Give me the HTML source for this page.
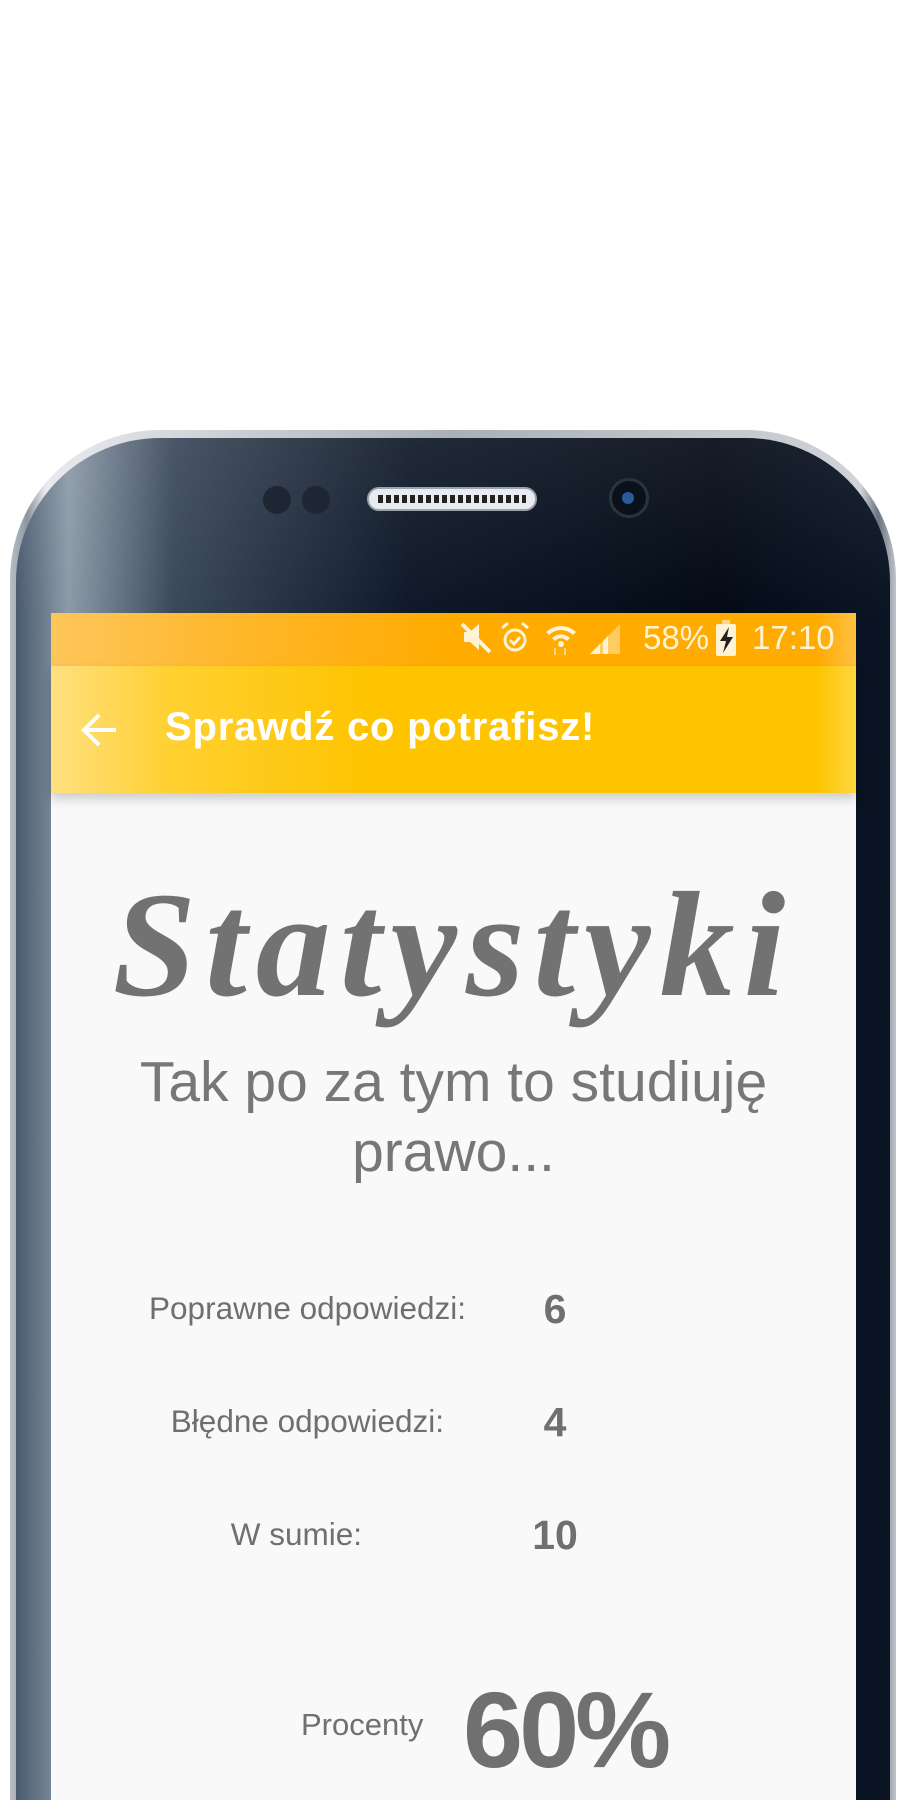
<!DOCTYPE html>
<html style="overflow:hidden;height:1800px"><head><meta charset="utf-8"><style>
*{margin:0;padding:0;box-sizing:border-box}
html,body{width:900px;height:1800px;overflow:hidden}
body{background:#fff;font-family:"Liberation Sans",sans-serif}
#wrap{position:relative;width:900px;height:1800px;overflow:hidden}
.abs{position:absolute}
#rim{left:10px;top:430px;width:886px;height:1370px;border-radius:150px 150px 0 0;background:linear-gradient(90deg,#b8bec6,#8d96a0 2%,#e8eaee 4%,#aab0b8 50%,#d0d4d8 96%,#6c7480 98%,#c0c4ca)}
#body{left:16px;top:438px;width:874px;height:1362px;border-radius:144px 144px 0 0;background:linear-gradient(90deg,#4a5a6e 0%,#8c9aa8 6%,#3a485a 18%,#0e1828 45%,#030a16 80%,#0a1424 100%)}
#topgl{left:16px;top:438px;width:874px;height:180px;border-radius:144px 144px 0 0;background:linear-gradient(180deg,rgba(255,255,255,.08),rgba(0,0,0,0))}
#screen{left:51px;top:613px;width:805px;height:1187px;background:#f9f9f9}
#status{left:51px;top:613px;width:805px;height:53px;background:linear-gradient(90deg,#fdc65a 0%,#ffb627 25%,#ffab00 50%,#ffab00 95%,#ffc040)}
#bar{left:51px;top:666px;width:805px;height:127px;background:linear-gradient(90deg,#ffe080 0%,#ffd030 15%,#fec400 40%,#fec400 95%,#ffd640);box-shadow:0 6px 10px rgba(0,0,0,.18)}
.st{color:#fff3d6;font-size:33px;top:619px;font-weight:300}
.ttl{left:165px;top:705px;color:#fff;font-size:40px;font-weight:bold;letter-spacing:0.8px}
.big{left:51px;width:805px;text-align:center;top:859px;font-family:"Liberation Serif",serif;font-style:italic;font-weight:bold;font-size:150px;color:#727272;letter-spacing:9px}
.sub{left:51px;width:805px;text-align:center;top:1047px;font-size:57px;color:#777;line-height:70px}
.lab{font-size:31.5px;color:#6f6f6f;text-align:right;width:400px;left:66px}
.val{font-size:41px;font-weight:bold;color:#6f6f6f;width:120px;text-align:center;left:495px}
</style></head><body><div id="wrap">
<div id="rim" class="abs"></div>
<div id="body" class="abs"></div>
<div id="topgl" class="abs"></div>
<div class="abs" style="left:263px;top:486px;width:28px;height:28px;border-radius:50%;background:#1e2633"></div>
<div class="abs" style="left:302px;top:486px;width:28px;height:28px;border-radius:50%;background:#1e2633"></div>
<div class="abs" style="left:367px;top:487px;width:170px;height:24px;border-radius:12px;background:#e8ecf0;border:2px solid #9aa4ae"></div>
<div class="abs" style="left:378px;top:495px;width:148px;height:8px;background:repeating-linear-gradient(90deg,#222 0 5px,transparent 5px 8px)"></div>
<div class="abs" style="left:609px;top:478px;width:40px;height:40px;border-radius:50%;background:#0b111a;border:3px solid #2a3340"></div>
<div class="abs" style="left:622px;top:492px;width:12px;height:12px;border-radius:50%;background:#2a5a9a"></div>

<div id="screen" class="abs"></div>
<div id="status" class="abs"></div>
<div id="bar" class="abs"></div>

<svg class="abs" style="left:460px;top:620px" width="180" height="36" viewBox="0 0 180 36">
<g fill="#fff3d6">
<path d="M4 12h6l9-8v26l-9-8H4z"/>
<path d="M2 4l28 28" stroke="#fff3d6" stroke-width="4"/>
<circle cx="55" cy="20" r="10" fill="none" stroke="#fff3d6" stroke-width="3"/>
<path d="M50 20l4 4 6-7" fill="none" stroke="#fff3d6" stroke-width="3"/>
<path d="M42 8l6-5M68 8l-6-5" stroke="#fff3d6" stroke-width="3"/>
<path d="M86 12a22 22 0 0 1 30 0l-3 3a17 17 0 0 0-24 0z"/>
<path d="M92 18a13 13 0 0 1 18 0l-3 3a8 8 0 0 0-12 0z"/>
<circle cx="101" cy="24" r="3"/>
<path d="M95 28v7M105 28v7" stroke="#ffd98a" stroke-width="2"/>
<path d="M130 34L160 4v30z" opacity=".45"/>
<path d="M130 34l10-10v10z"/><path d="M143 21l5-5v18h-5z"/>
</g></svg>
<div class="abs st" style="left:643px">58%</div>
<div class="abs" style="left:716px;top:624px;width:20px;height:32px;background:#fff3d6;border-radius:2px"></div>
<div class="abs" style="left:722px;top:620px;width:8px;height:5px;background:#fff3d6;opacity:.6"></div>
<svg class="abs" style="left:716px;top:626px" width="20" height="28"><path d="M13 1L4 15h6l-3 12 10-16h-6z" fill="#222"/></svg>
<div class="abs st" style="left:752px">17:10</div>

<svg class="abs" style="left:80px;top:712px" width="40" height="36" viewBox="0 0 40 36"><path d="M36 18H5M19 3L4 18l15 15" fill="none" stroke="#fff" stroke-width="4"/></svg>
<div class="abs ttl">Sprawdź co potrafisz!</div>

<div class="abs big">Statystyki</div>
<div class="abs sub">Tak po za tym to studiuję<br>prawo...</div>

<div class="abs lab" style="top:1290px">Poprawne odpowiedzi:</div>
<div class="abs val" style="top:1286px">6</div>
<div class="abs lab" style="top:1403px;left:44px">Błędne odpowiedzi:</div>
<div class="abs val" style="top:1399px">4</div>
<div class="abs lab" style="top:1516px;left:-38px">W sumie:</div>
<div class="abs val" style="top:1512px">10</div>

<div class="abs" style="left:301px;top:1707px;font-size:31px;color:#707070">Procenty</div>
<div class="abs" style="left:463px;top:1667px;font-size:108px;font-weight:bold;color:#707070;letter-spacing:-4px">60%</div>
</div></body></html>
